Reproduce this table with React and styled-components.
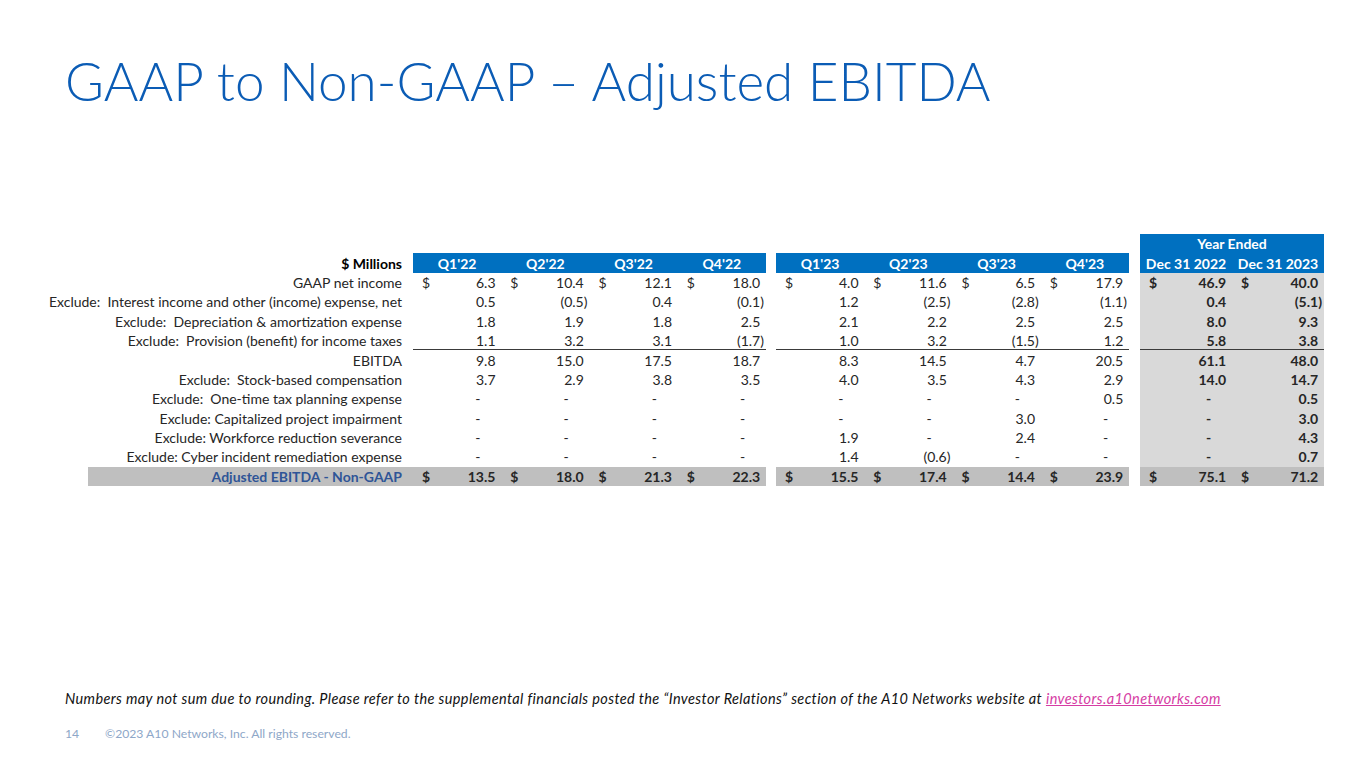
import React from "react";
import styled, { createGlobalStyle } from "styled-components";

const quarters22 = ["Q1'22", "Q2'22", "Q3'22", "Q4'22"];
const quarters23 = ["Q1'23", "Q2'23", "Q3'23", "Q4'23"];

const rows = [
  {
    label: "GAAP net income",
    dollar: true,
    a: ["6.3", "10.4", "12.1", "18.0"],
    b: ["4.0", "11.6", "6.5", "17.9"],
    y: ["46.9", "40.0"],
  },
  {
    label: "Exclude:  Interest income and other (income) expense, net",
    a: ["0.5", "(0.5)", "0.4", "(0.1)"],
    b: ["1.2", "(2.5)", "(2.8)", "(1.1)"],
    y: ["0.4", "(5.1)"],
  },
  {
    label: "Exclude:  Depreciation & amortization expense",
    a: ["1.8", "1.9", "1.8", "2.5"],
    b: ["2.1", "2.2", "2.5", "2.5"],
    y: ["8.0", "9.3"],
  },
  {
    label: "Exclude:  Provision (benefit) for income taxes",
    rule: true,
    a: ["1.1", "3.2", "3.1", "(1.7)"],
    b: ["1.0", "3.2", "(1.5)", "1.2"],
    y: ["5.8", "3.8"],
  },
  {
    label: "EBITDA",
    a: ["9.8", "15.0", "17.5", "18.7"],
    b: ["8.3", "14.5", "4.7", "20.5"],
    y: ["61.1", "48.0"],
  },
  {
    label: "Exclude:  Stock-based compensation",
    a: ["3.7", "2.9", "3.8", "3.5"],
    b: ["4.0", "3.5", "4.3", "2.9"],
    y: ["14.0", "14.7"],
  },
  {
    label: "Exclude:  One-time tax planning expense",
    a: ["-", "-", "-", "-"],
    b: ["-", "-", "-", "0.5"],
    y: ["-", "0.5"],
  },
  {
    label: "Exclude: Capitalized project impairment",
    a: ["-", "-", "-", "-"],
    b: ["-", "-", "3.0", "-"],
    y: ["-", "3.0"],
  },
  {
    label: "Exclude: Workforce reduction severance",
    a: ["-", "-", "-", "-"],
    b: ["1.9", "-", "2.4", "-"],
    y: ["-", "4.3"],
  },
  {
    label: "Exclude: Cyber incident remediation expense",
    a: ["-", "-", "-", "-"],
    b: ["1.4", "(0.6)", "-", "-"],
    y: ["-", "0.7"],
  },
];

const total = {
  a: ["13.5", "18.0", "21.3", "22.3"],
  b: ["15.5", "17.4", "14.4", "23.9"],
  y: ["75.1", "71.2"],
};

function Amount({ v }) {
  if (v === "-") {
    return (
      <Figure>
        <Dash>-</Dash>
        <Paren $hidden>)</Paren>
      </Figure>
    );
  }
  const neg = v.startsWith("(");
  return (
    <Figure>
      {neg ? v.slice(0, -1) : v}
      <Paren $hidden={!neg}>)</Paren>
    </Figure>
  );
}

function Cell({ v, dollar, ...rest }) {
  return (
    <DataCell {...rest}>
      <span>{dollar ? "$" : ""}</span>
      <Amount v={v} />
    </DataCell>
  );
}

function App() {
  return (
    <>
      <GlobalStyle />
      <Slide>
        <Title>GAAP to Non-GAAP – Adjusted EBITDA</Title>
        <Table>
          <Blank style={{ gridColumn: "1 / 12" }} />
          <YearHead>Year Ended</YearHead>

          <HeadLabel>$ Millions</HeadLabel>
          {quarters22.map((q) => (
            <HeadCell key={q}>{q}</HeadCell>
          ))}
          <Blank />
          {quarters23.map((q) => (
            <HeadCell key={q}>{q}</HeadCell>
          ))}
          <Blank />
          <HeadCell>Dec 31 2022</HeadCell>
          <HeadCell>Dec 31 2023</HeadCell>

          {rows.map((r) => (
            <React.Fragment key={r.label}>
              <Label>{r.label}</Label>
              {r.a.map((v, i) => (
                <Cell key={"a" + i} v={v} dollar={r.dollar} $rule={r.rule} />
              ))}
              <Blank />
              {r.b.map((v, i) => (
                <Cell key={"b" + i} v={v} dollar={r.dollar} $rule={r.rule} />
              ))}
              <Blank />
              {r.y.map((v, i) => (
                <Cell
                  key={"y" + i}
                  v={v}
                  dollar={r.dollar}
                  $rule={r.rule}
                  $bold
                  $shade="#d9d9d9"
                />
              ))}
            </React.Fragment>
          ))}

          <TotalLabel>Adjusted EBITDA - Non-GAAP</TotalLabel>
          {total.a.map((v, i) => (
            <Cell key={"ta" + i} v={v} dollar $bold $shade="#bfbfbf" />
          ))}
          <Blank />
          {total.b.map((v, i) => (
            <Cell key={"tb" + i} v={v} dollar $bold $shade="#bfbfbf" />
          ))}
          <Blank />
          {total.y.map((v, i) => (
            <Cell key={"ty" + i} v={v} dollar $bold $shade="#bfbfbf" />
          ))}
        </Table>

        <Note>
          Numbers may not sum due to rounding. Please refer to the supplemental
          financials posted the “Investor Relations” section of the A10 Networks
          website at <NoteLink>investors.a10networks.com</NoteLink>
        </Note>

        <Footer>
          <PageNo>14</PageNo>
          <span>©2023 A10 Networks, Inc. All rights reserved.</span>
        </Footer>
      </Slide>
    </>
  );
}

export default App;

const GlobalStyle = createGlobalStyle`
  body {
    margin: 0;
    background: #ffffff;
    font-family: Lato, "Open Sans", sans-serif;
  }
`;

const Slide = styled.div`
  width: 1365px;
  height: 768px;
  box-sizing: border-box;
  overflow: hidden;
  display: flex;
  flex-direction: column;
`;

const Title = styled.h1`
  margin: 46px 0 0 65px;
  height: 70px;
  line-height: 70px;
  font-size: 53px;
  font-weight: 300;
  color: #0b5cb5;
  white-space: nowrap;
`;

const Table = styled.div`
  margin: 118px 0 0 45px;
  display: grid;
  grid-template-columns: 368px repeat(4, 88.25px) 10px repeat(4, 88.25px) 11px repeat(2, 92px);
  grid-auto-rows: 19.4px;
  font-size: 14px;
  color: #262626;
`;

const Blank = styled.div``;

const YearHead = styled.div`
  grid-column: 12 / 14;
  background: #0070c0;
  color: #ffffff;
  font-weight: 700;
  display: flex;
  align-items: center;
  justify-content: center;
`;

const HeadCell = styled.div`
  background: #0070c0;
  color: #ffffff;
  font-weight: 700;
  display: flex;
  align-items: center;
  justify-content: center;
  white-space: nowrap;
`;

const Label = styled.div`
  display: flex;
  align-items: center;
  justify-content: flex-end;
  padding-right: 11px;
  white-space: pre;
`;

const HeadLabel = styled(Label)`
  font-weight: 700;
  color: #000000;
`;

const TotalLabel = styled(Label)`
  margin-left: 43px;
  background: #bfbfbf;
  font-weight: 700;
  color: #2f5597;
`;

const DataCell = styled.div`
  display: flex;
  align-items: center;
  justify-content: space-between;
  box-sizing: border-box;
  padding: 0 2px 0 9px;
  background: ${(p) => p.$shade || "transparent"};
  font-weight: ${(p) => (p.$bold ? 700 : 400)};
  border-bottom: ${(p) => (p.$rule ? "1px solid #3a3a3a" : "none")};
  white-space: nowrap;
`;

const Figure = styled.span`
  display: flex;
  align-items: center;
`;

const Dash = styled.span`
  margin-right: 15px;
`;

const Paren = styled.span`
  visibility: ${(p) => (p.$hidden ? "hidden" : "visible")};
`;

const Note = styled.p`
  margin: 204px 0 0 65px;
  font-size: 14.5px;
  letter-spacing: 0.38px;
  line-height: 18px;
  font-style: italic;
  color: #111111;
  white-space: nowrap;
`;

const NoteLink = styled.span`
  color: #d63ca4;
  text-decoration: underline;
`;

const Footer = styled.div`
  margin: 18px 0 0 65px;
  display: flex;
  gap: 26px;
  font-size: 12.2px;
  line-height: 16px;
  color: #8ea7c8;
`;

const PageNo = styled.span`
  width: 14px;
`;
